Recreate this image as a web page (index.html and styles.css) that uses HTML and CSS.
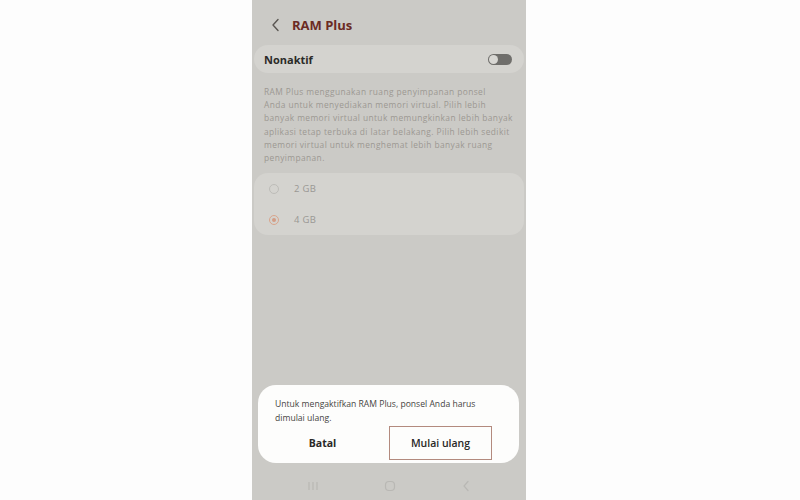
FILE: index.html
```html
<!DOCTYPE html>
<html lang="id">
<head>
<meta charset="utf-8">
<title>RAM Plus</title>
<link rel="stylesheet" href="styles.css">
</head>
<body>
<div class="phone">
  <div class="header">
    <svg class="back" width="10" height="14" viewBox="0 0 10 14"><path d="M7 1.5 L2 7 L7 12.5" fill="none" stroke="#5a5652" stroke-width="1.4" stroke-linecap="round" stroke-linejoin="round"/></svg>
    <span class="title">RAM Plus</span>
  </div>
  <div class="card switch-card">
    <span class="switch-label">Nonaktif</span>
    <span class="toggle"><span class="knob"></span></span>
  </div>
  <p class="desc">RAM Plus menggunakan ruang penyimpanan ponsel<br>Anda untuk menyediakan memori virtual. Pilih lebih<br>banyak memori virtual untuk memungkinkan lebih banyak<br>aplikasi tetap terbuka di latar belakang. Pilih lebih sedikit<br>memori virtual untuk menghemat lebih banyak ruang<br>penyimpanan.</p>
  <div class="card radio-card">
    <div class="radio-row"><span class="radio"></span><span class="radio-text">2 GB</span></div>
    <div class="radio-row"><span class="radio on"></span><span class="radio-text">4 GB</span></div>
  </div>
  <div class="spacer"></div>
  <div class="dialog">
    <p class="dialog-text">Untuk mengaktifkan RAM Plus, ponsel Anda harus dimulai ulang.</p>
    <div class="dialog-buttons">
      <span class="btn">Batal</span>
      <span class="btn primary">Mulai ulang</span>
    </div>
  </div>
  <div class="nav">
    <svg width="12" height="10" viewBox="0 0 12 10"><path d="M2 1v8M6 1v8M10 1v8" stroke="#b9b8b4" stroke-width="1.2"/></svg>
    <svg width="12" height="12" viewBox="0 0 12 12"><rect x="1.5" y="1.5" width="9" height="9" rx="3.5" fill="none" stroke="#b9b8b4" stroke-width="1.2"/></svg>
    <svg width="10" height="12" viewBox="0 0 10 12"><path d="M7 1.5 L3 6 L7 10.5" fill="none" stroke="#b9b8b4" stroke-width="1.2" stroke-linecap="round"/></svg>
  </div>
</div>
</body>
</html>
```

FILE: styles.css
```css
html, body {
  margin: 0;
  padding: 0;
  background: #fdfdfd;
}
body {
  font-family: "Open Sans", "Liberation Sans", sans-serif;
}
.phone {
  margin-left: 252px;
  width: 274px;
  height: 500px;
  background: #cbcac6;
  display: flex;
  flex-direction: column;
}
.header {
  height: 45px;
  display: flex;
  align-items: center;
  padding-left: 19px;
  padding-top: 5px;
  box-sizing: border-box;
}
.back {
  margin-right: 11px;
}
.title {
  font-size: 13px;
  font-weight: 700;
  color: #6b2b24;
}
.card {
  background: #d4d3cf;
  margin: 0 2px;
  border-radius: 14px;
}
.switch-card {
  height: 28px;
  display: flex;
  align-items: center;
  justify-content: space-between;
  padding: 0 12px 0 10px;
}
.switch-label {
  font-size: 11px;
  font-weight: 700;
  color: #2b2a28;
}
.toggle {
  width: 24px;
  height: 11px;
  border-radius: 6px;
  background: #6f6e6b;
  position: relative;
}
.knob {
  position: absolute;
  left: 1px;
  top: 1px;
  width: 9px;
  height: 9px;
  border-radius: 50%;
  background: #d8d7d3;
}
.desc {
  margin: 0;
  padding: 12px 6px 9px 12px;
  font-family: "Open Sans", sans-serif;
  font-size: 8.4px;
  letter-spacing: 0.4px;
  line-height: 13.2px;
  color: #9c9892;
  white-space: nowrap;
}
.radio-card {
  height: 62px;
  display: flex;
  flex-direction: column;
  justify-content: space-around;
  padding: 0 0 0 15px;
}
.radio-row {
  display: flex;
  align-items: center;
  height: 28px;
}
.radio {
  width: 10px;
  height: 10px;
  border-radius: 50%;
  border: 1px solid #bdbcb8;
  box-sizing: border-box;
  margin-right: 15px;
  position: relative;
}
.radio.on {
  border-color: #d9a58c;
}
.radio.on::after {
  content: "";
  position: absolute;
  left: 2px;
  top: 2px;
  width: 4px;
  height: 4px;
  border-radius: 50%;
  background: #d39c85;
}
.radio-text {
  font-size: 9.5px;
  letter-spacing: 0.3px;
  color: #9a9894;
}
.spacer {
  flex: 1;
}
.dialog {
  margin: 0 7px 0 6px;
  height: 78px;
  background: #fdfdfc;
  border-radius: 18px;
  box-sizing: border-box;
  padding: 12px 17px 0 17px;
}
.dialog-text {
  margin: 0;
  font-size: 8.6px;
  line-height: 14px;
  color: #454442;
  width: 220px;
}
.dialog-buttons {
  display: flex;
  align-items: center;
  margin-top: 1px;
  height: 34px;
}
.btn {
  font-size: 10.5px;
  font-weight: 700;
  color: #2a2927;
  text-align: center;
}
.btn:first-child {
  width: 95px;
}
.btn.primary {
  margin-left: 19px;
  width: 103px;
  height: 34px;
  line-height: 32px;
  border: 1px solid #b38a7e;
  box-sizing: border-box;
  font-weight: 600;
}
.nav {
  height: 37px;
  display: flex;
  align-items: center;
  justify-content: space-between;
  padding: 8px 55px 0 55px;
  box-sizing: border-box;
}
```
